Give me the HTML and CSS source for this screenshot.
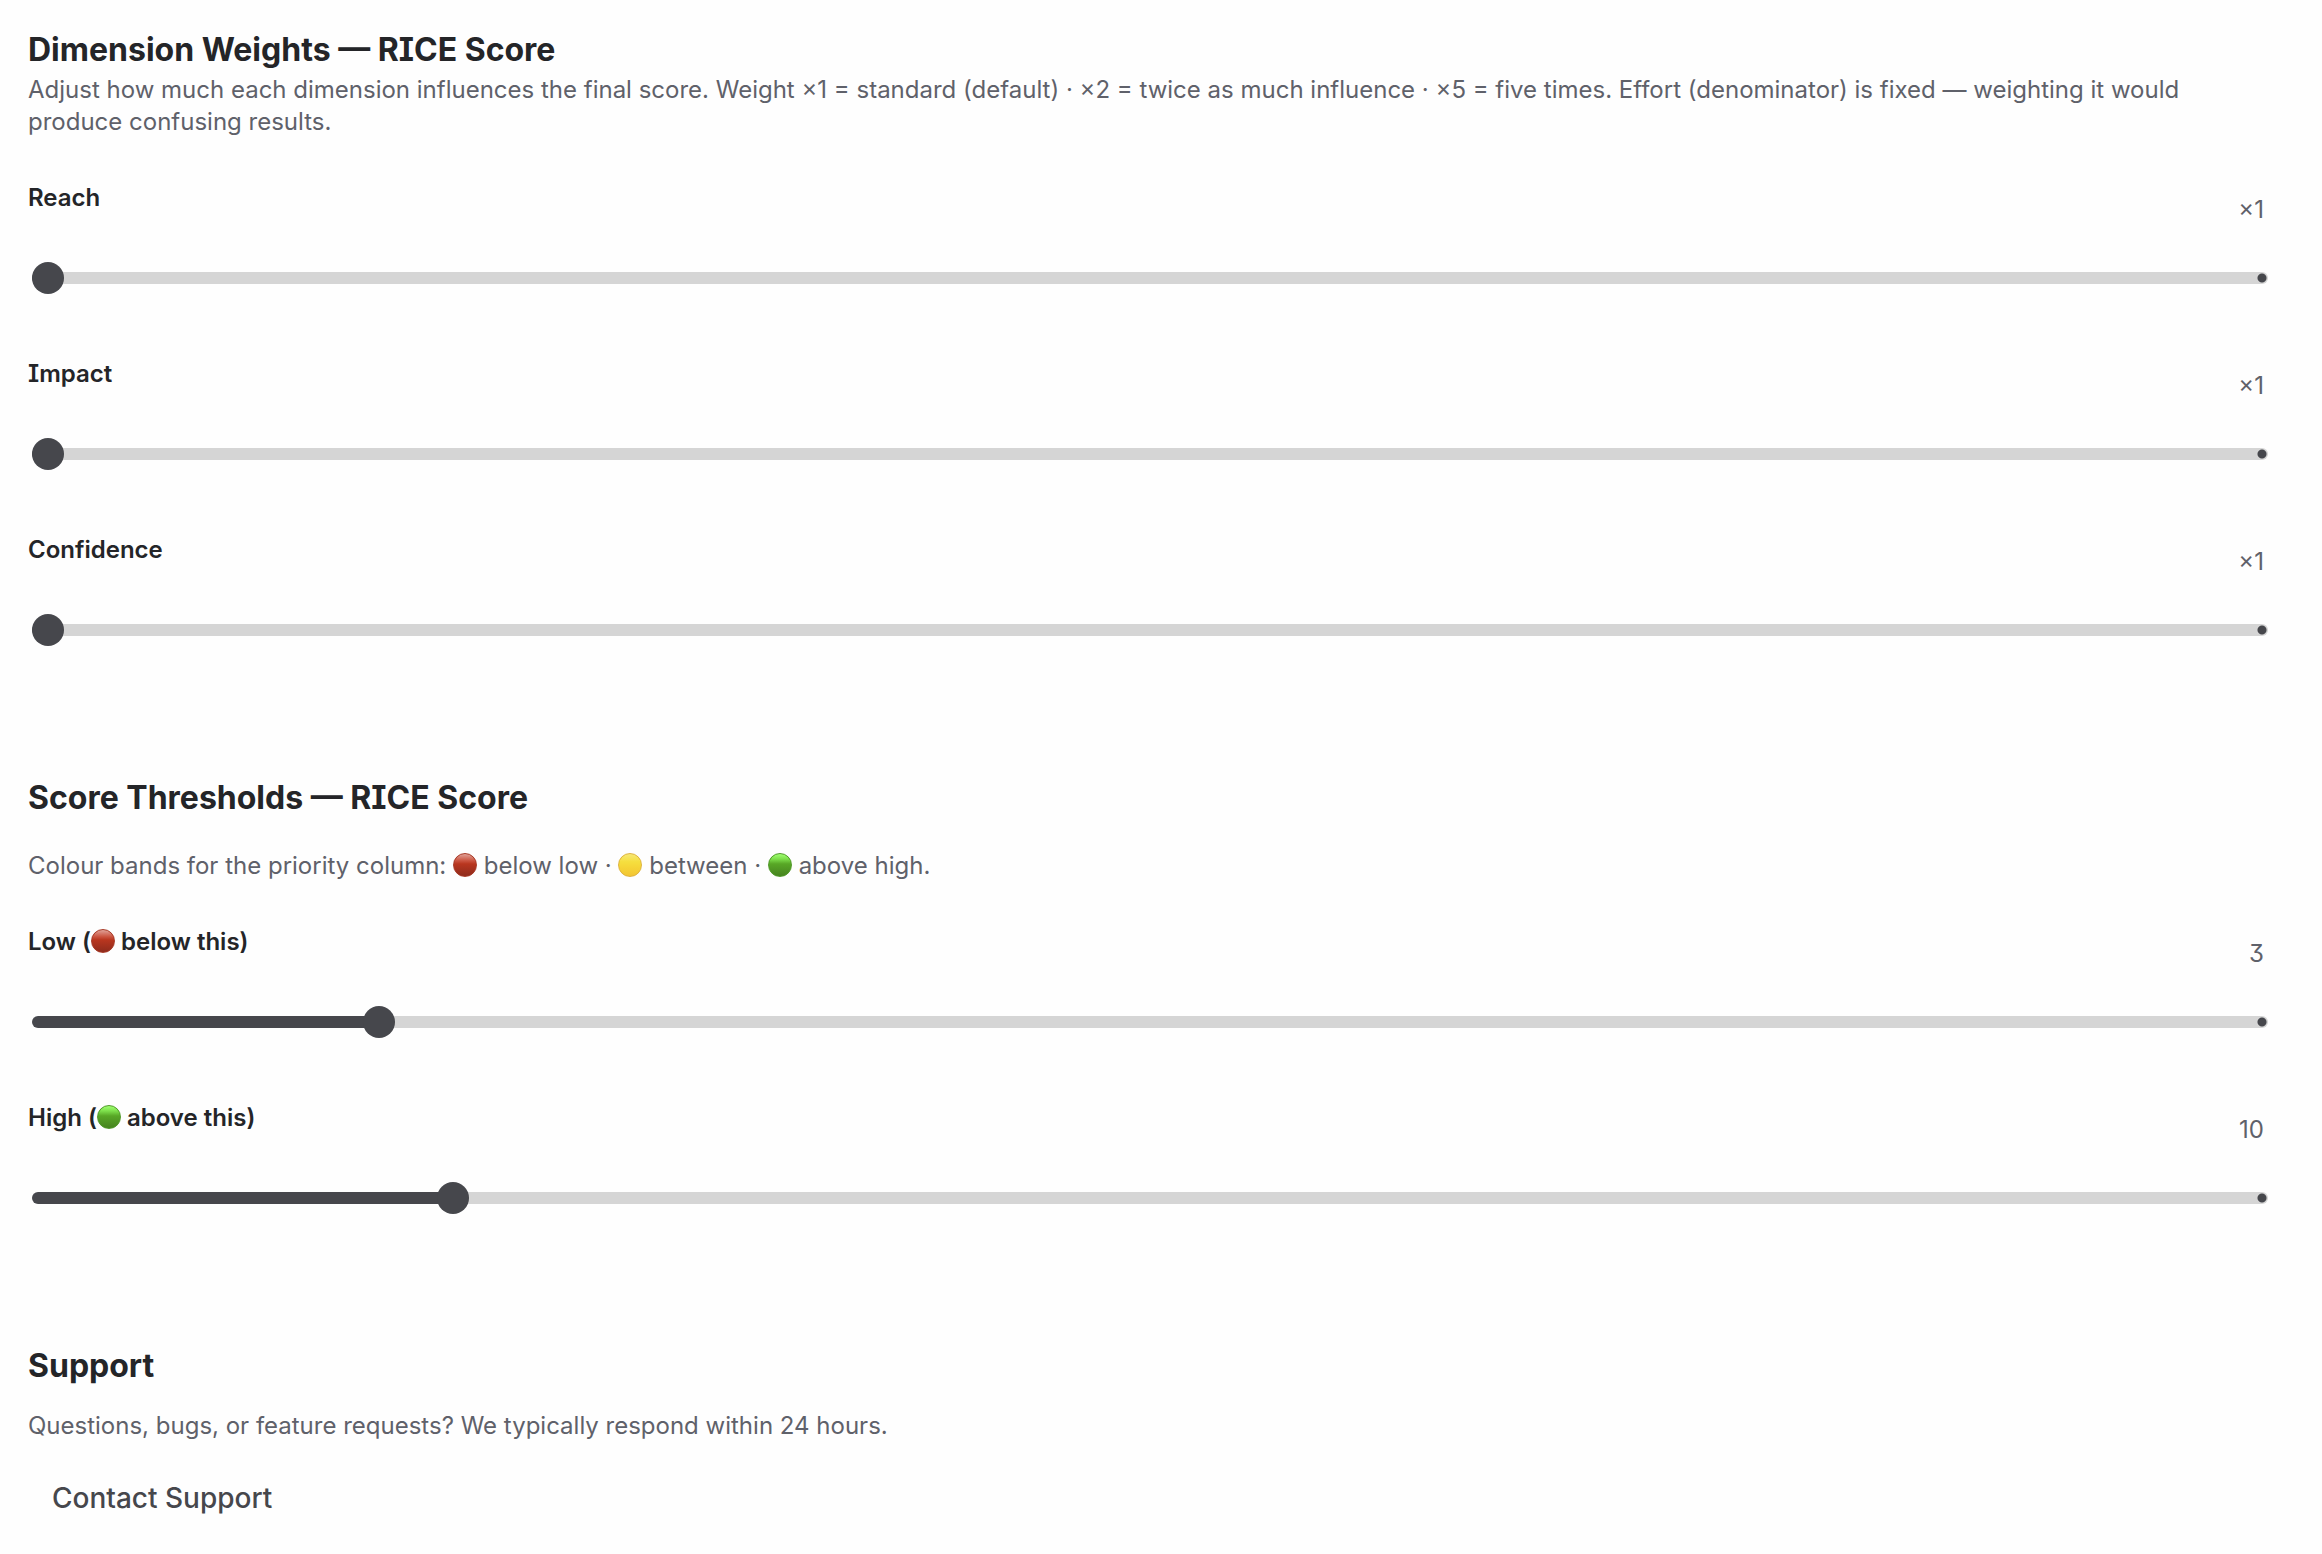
FILE: index.html
```html
<!DOCTYPE html>
<html lang="en">
  <head>
    <meta charset="UTF-8" />
    <meta name="viewport" content="width=device-width, initial-scale=1.0" />
    <title>RICE Score Settings</title>
    <link rel="stylesheet" href="styles.css">
  </head>
  <body>
    <main class="settings">
      <section class="section">
        <h2>Dimension Weights — RICE Score</h2>
        <p class="intro intro-tight">
          Adjust how much each dimension influences the final score. Weight ×1 = standard (default) · ×2 = twice as much influence · ×5 = five times. Effort (denominator) is fixed — weighting it would produce confusing results.
        </p>
        <div class="fields">
          <div class="field">
            <div class="field-head">
              <label for="reach">Reach</label>
              <output for="reach">×1</output>
            </div>
            <input type="range" id="reach" data-prefix="×" min="1" max="5" value="1" />
          </div>
          <div class="field">
            <div class="field-head">
              <label for="impact">Impact</label>
              <output for="impact">×1</output>
            </div>
            <input type="range" id="impact" data-prefix="×" min="1" max="5" value="1" />
          </div>
          <div class="field">
            <div class="field-head">
              <label for="confidence">Confidence</label>
              <output for="confidence">×1</output>
            </div>
            <input type="range" id="confidence" data-prefix="×" min="1" max="5" value="1" />
          </div>
        </div>
      </section>

      <section class="section">
        <h2>Score Thresholds — RICE Score</h2>
        <p class="intro">
          Colour bands for the priority column: <span class="dot dot-red"></span> below low · <span class="dot dot-yellow"></span> between · <span class="dot dot-green"></span> above high.
        </p>
        <div class="fields">
          <div class="field">
            <div class="field-head">
              <label for="low">Low (<span class="dot dot-red"></span> below this)</label>
              <output for="low">3</output>
            </div>
            <input type="range" id="low" min="0" max="20" value="3" style="--fill: 0.15" />
          </div>
          <div class="field">
            <div class="field-head">
              <label for="high">High (<span class="dot dot-green"></span> above this)</label>
              <output for="high">10</output>
            </div>
            <input type="range" id="high" min="1" max="50" value="10" style="--fill: 0.1837" />
          </div>
        </div>
      </section>

      <section class="section">
        <h2>Support</h2>
        <p class="support-text">Questions, bugs, or feature requests? We typically respond within 24 hours.</p>
        <button type="button" class="contact-button">Contact Support</button>
      </section>
    </main>

    <script>
      const sliders = document.querySelectorAll("input[type='range']");

      const updateSlider = (slider) => {
        const { min, max, value } = slider;
        const output = document.querySelector(`output[for='${slider.id}']`);
        slider.style.setProperty("--fill", (value - min) / (max - min));
        output.textContent = (slider.dataset.prefix || "") + value;
      };

      sliders.forEach((slider) => {
        slider.addEventListener("input", () => updateSlider(slider));
        updateSlider(slider);
      });
    </script>
  </body>
</html>
```

FILE: styles.css
```css
body {
  margin: 0;
  font-family: Inter, "Liberation Sans", sans-serif;
  font-size: 24px;
  line-height: 32px;
  /* serifed capital I, flat-top three */
  font-feature-settings: "cv08", "cv09";
  color: #242528;
  background-color: #fefefe;
}

.settings {
  display: flex;
  flex-direction: column;
  gap: 132px;
  padding: 30px 50px 16px 28px;
}

h2 {
  margin: 0;
  font-size: 32px;
  line-height: 40px;
  font-weight: 700;
}

p {
  margin: 0;
  color: #5f616a;
}

.intro {
  margin: 32px 0 44px;
}

.intro-tight {
  margin-top: 4px;
}

.fields {
  display: flex;
  flex-direction: column;
  gap: 64px;
}

.field {
  display: flex;
  flex-direction: column;
  gap: 36px;
}

.field-head {
  display: flex;
  justify-content: space-between;
}

label {
  font-weight: 600;
}

output {
  padding: 12px 8px 0 0;
  color: #5f616a;
}

input[type="range"] {
  --fill: 0;
  --fill-end: calc(16px + (100% - 32px) * var(--fill));
  appearance: none;
  height: 32px;
  margin: 0 4px;
  background: none;
  cursor: pointer;
}

input[type="range"]::-webkit-slider-runnable-track {
  height: 12px;
  border-radius: 6px;
  background:
    radial-gradient(circle at calc(100% - 6px) 50%, #46474c 4px, transparent 5px),
    linear-gradient(to right, #46474c var(--fill-end), #d5d5d5 var(--fill-end));
}

input[type="range"]::-webkit-slider-thumb {
  appearance: none;
  width: 32px;
  height: 32px;
  margin-top: -10px;
  border-radius: 50%;
  background-color: #46474c;
}

.dot {
  display: inline-block;
  box-sizing: border-box;
  width: 24px;
  height: 24px;
  border-radius: 50%;
  vertical-align: -3px;
}

.dot-red {
  border: 1px solid #a83a27;
  background: linear-gradient(#e0a298, #cb5541 30%, #b9361f 45%, #8e2b1c);
}

.dot-yellow {
  border: 1px solid #dfb440;
  background: linear-gradient(#f7e876, #f5df3f 35%, #f5d537 60%, #f3c533);
}

.dot-green {
  border: 1px solid #519a2a;
  background: linear-gradient(#a0ff72, #7ee04c 22%, #58a726 45%, #46831f);
}

.support-text {
  margin: 24px 0;
}

.contact-button {
  padding: 12px 24px;
  border: none;
  border-radius: 6px;
  font: inherit;
  font-size: 28px;
  line-height: 40px;
  font-weight: 500;
  color: #46474c;
  background: none;
  cursor: pointer;
}

.contact-button:hover {
  background-color: #f0f1f2;
}
```
